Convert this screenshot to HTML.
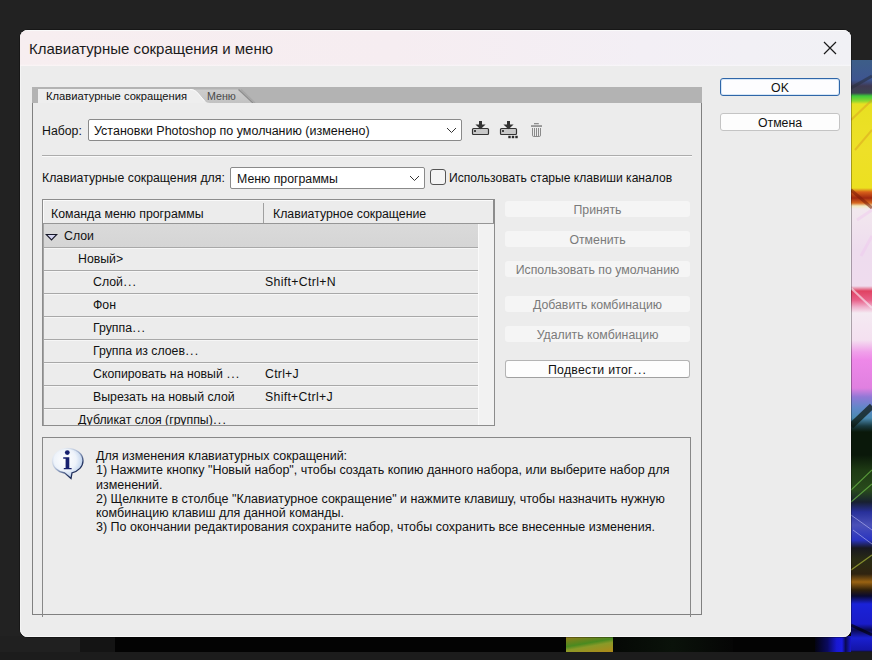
<!DOCTYPE html>
<html><head><meta charset="utf-8">
<style>
*{box-sizing:border-box;margin:0;padding:0}
html,body{width:872px;height:660px;overflow:hidden;background:#222222;font-family:"Liberation Sans",sans-serif;}
.a{position:absolute}
.t{position:absolute;white-space:nowrap;font-size:12.3px;color:#111;line-height:14px}
#dlg{left:20px;top:30px;width:831px;height:607px;border-radius:8px;background:#ececec;overflow:hidden;box-shadow:0 0 0 1px rgba(0,0,0,0.3),inset 0 -1px 0 #f6f6f6,inset -1px 0 0 #f2f0f2,inset 1px 0 0 #f4f4f4}
#title{left:0;top:0;width:831px;height:36px;background:linear-gradient(180deg,rgba(255,255,255,0) 33px,rgba(255,255,255,0.35) 34.5px,rgba(236,234,235,1) 36px),linear-gradient(90deg,#f7eef0,#f6edf1 45%,#f3eff5 75%,#f1f1f5);border-top:1px solid #fafafa}
</style></head><body>
<!-- background picture behind dialog -->
<div class="a" style="left:0;top:652px;width:872px;height:8px;background:#1c1c1c"></div>
<div class="a" style="left:0;top:636px;width:80px;height:16px;background:#202020"></div>
<div class="a" style="left:80px;top:636px;width:35px;height:16px;background:#141414"></div>
<div class="a" style="left:115px;top:60px;width:757px;height:592px;background:#030303"></div>
<div class="a" style="left:566px;top:636px;width:47px;height:16px;background:linear-gradient(170deg,#9a7a18 0%,#4a8a20 45%,#8a9a28 60%,#b08818 100%)"></div>
<div class="a" style="left:613px;top:636px;width:120px;height:16px;background:linear-gradient(90deg,#050805,#0a120a 50%,#050505)"></div>
<div class="a" style="left:815px;top:636px;width:36px;height:16px;background:linear-gradient(90deg,#030310,#0a0a60 35%,#1818d0 60%,#1a1ae0 75%,#0a0a50 85%,#1818d0)"></div>
<div class="a" style="left:851px;top:60px;width:21px;height:592px;background:linear-gradient(180deg,#3d5e88 0px,#3e5590 20px,#403a52 26px,#3c4450 33px,#3ec83a 36px,#8ad830 41px,#e8e022 44px,#eee028 90px,#ece020 128px,#d8601a 132px,#a02810 138px,#d86a20 143px,#f0eac0 146px,#f2e8ee 149px,#eedcee 190px,#efdcee 226px,#e04262 231px,#e86088 240px,#f0b0cc 247px,#f4eaf2 253px,#f4e0f0 280px,#f0a0ea 292px,#ee88e8 300px,#e080e0 328px,#9078d6 337px,#6088c8 348px,#4a8ab0 358px,#1a3a40 366px,#0a180a 372px,#0a180a 395px,#1e3a14 410px,#284a1c 430px,#182030 442px,#28309a 452px,#4a50b8 465px,#2a34c0 480px,#181820 488px,#2a2c14 500px,#302410 514px,#9a6212 522px,#30200a 530px,#0a0a30 536px,#1a22d8 544px,#1a1cc8 564px,#0a0a50 570px,#1a20d0 578px,#1414a8 590px,#141414 592px)"></div>
<svg class="a" style="left:851px;top:60px" width="21" height="592" viewBox="0 0 21 592">
 <path d="M0 28L21 16" stroke="#2a3040" stroke-width="3" opacity="0.6"/>
 <path d="M0 60L21 40M4 90L21 70" stroke="#d89a20" stroke-width="2" opacity="0.45"/>
 <path d="M0 130L21 148" stroke="#7a1a08" stroke-width="3" opacity="0.55"/>
 <path d="M6 160L21 150M10 196L21 176" stroke="#f0c4f0" stroke-width="3" opacity="0.4"/>
 <path d="M0 228L21 248" stroke="#f8f0f8" stroke-width="2" opacity="0.6"/>
 <path d="M0 366L21 346" stroke="#0a140a" stroke-width="6" opacity="0.7"/>
 <path d="M0 430L21 410M0 442L21 424" stroke="#7ad050" stroke-width="1.2" opacity="0.6"/>
 <path d="M0 455L21 470M2 470L21 484" stroke="#c8c8f8" stroke-width="1" opacity="0.55"/>
 <path d="M0 510L21 495" stroke="#c0d040" stroke-width="1.3" opacity="0.6"/>
 <path d="M0 565L21 575" stroke="#000" stroke-width="3" opacity="0.6"/>
</svg>
<div class="a" id="dlg">
  <div class="a" id="title"></div>
  <div class="t" style="left:9px;top:10px;font-size:15px;color:#1b1b1b;line-height:17px">Клавиатурные сокращения и меню</div>
  <svg class="a" style="left:803px;top:11px" width="14" height="14" viewBox="0 0 14 14"><path d="M1 1L13 13M13 1L1 13" stroke="#1a1a1a" stroke-width="1.2"/></svg>
</div>

<!-- tab bar -->
<div class="a" style="left:32px;top:87px;width:670px;height:16px;background:#b3b3b3"></div>
<svg class="a" style="left:32px;top:87px" width="240" height="16" viewBox="0 0 240 16">
  <defs><linearGradient id="mt" x1="0" y1="0" x2="0" y2="1"><stop offset="0" stop-color="#cdcdcd"/><stop offset="1" stop-color="#c2c2c2"/></linearGradient></defs>
  <path d="M150 2.5 L206.5 2.5 L221 16 L150 16Z" fill="url(#mt)"/>
  <path d="M206.5 2.5 L221 16" stroke="#8e8e8e" stroke-width="1.3"/>
  <path d="M209 2.5 L223 16" stroke="#a6a6a6" stroke-width="1.5"/>
  <path d="M6 2 L158 2 C162 2 164 3.5 166.5 6.5 L172.5 13.5 C174 15.2 175.5 16 178 16 L6 16Z" fill="#eeeeee"/>
  <path d="M158 2.5 C162 2.5 164 4 166.5 7 L172.5 14" fill="none" stroke="#fbfbfb" stroke-width="1"/>
</svg>
<div class="t" style="left:46px;top:89px;font-size:11.2px;color:#111">Клавиатурные сокращения</div>
<div class="t" style="left:207px;top:89px;font-size:10.7px;color:#4a4a4a">Меню</div>

<!-- panel borders -->
<div class="a" style="left:32px;top:103px;width:1px;height:512px;background:#808080"></div>
<div class="a" style="left:701px;top:103px;width:1px;height:512px;background:#808080"></div>
<div class="a" style="left:32px;top:614px;width:670px;height:1px;background:#808080"></div>

<div class="t" style="left:42px;top:124px">Набор:</div>
<div class="a" style="left:88px;top:119px;width:374px;height:22px;border:1px solid #8a8a8a;border-radius:2px;background:#fff"></div>
<div class="t" style="left:94px;top:124px;font-size:12.5px">Установки Photoshop по умолчанию (изменено)</div>
<svg class="a" style="left:446px;top:127px" width="11" height="7" viewBox="0 0 11 7"><path d="M1 1L5.5 5.5L10 1" fill="none" stroke="#333" stroke-width="1"/></svg>
<!-- icons -->
<svg class="a" style="left:471px;top:120px" width="20" height="20" viewBox="0 0 20 20">
  <rect x="1.5" y="8.5" width="16" height="6" rx="1" fill="#c8c8c8" stroke="#333" stroke-width="1.2"/>
  <rect x="3" y="10" width="2" height="2" fill="#444"/>
  <path d="M8 1h3v3.5h3.6l-5.1 4.8l-5.1-4.8h3.6z" fill="#333"/>
</svg>
<svg class="a" style="left:499px;top:120px" width="20" height="20" viewBox="0 0 20 20">
  <rect x="1.5" y="8.5" width="16" height="6" rx="1" fill="#c8c8c8" stroke="#333" stroke-width="1.2"/>
  <rect x="3" y="10" width="2" height="2" fill="#444"/>
  <path d="M8 1h3v3.5h3.6l-5.1 4.8l-5.1-4.8h3.6z" fill="#333"/>
  <rect x="9.3" y="15.8" width="2.4" height="2.4" fill="#2a2a2a"/><rect x="12.8" y="15.8" width="2.4" height="2.4" fill="#2a2a2a"/><rect x="16.3" y="15.8" width="2.4" height="2.4" fill="#2a2a2a"/>
</svg>
<svg class="a" style="left:526px;top:118px" width="22" height="22" viewBox="0 0 22 22">
  <rect x="8" y="5" width="4.8" height="1.3" fill="#8e8e8e"/>
  <rect x="5" y="7.2" width="11" height="1.7" fill="#8e8e8e"/>
  <path d="M6.5 10v7.6M8.5 10v8M10.5 10v8M12.5 10v8M14.5 10v7.6" stroke="#8a8a8a" stroke-width="1"/>
  <path d="M6.5 17.3Q6.5 18.5 7.8 18.5H13.2Q14.5 18.5 14.5 17.3" fill="none" stroke="#8a8a8a" stroke-width="1"/>
</svg>
<div class="a" style="left:42px;top:155px;width:650px;height:1px;background:#acacac"></div><div class="a" style="left:42px;top:156px;width:650px;height:1px;background:#fafafa"></div>

<div class="t" style="left:42px;top:171px">Клавиатурные сокращения для:</div>
<div class="a" style="left:230px;top:167px;width:195px;height:22px;border:1px solid #8a8a8a;border-radius:2px;background:#fff"></div>
<div class="t" style="left:237px;top:172px">Меню программы</div>
<svg class="a" style="left:409px;top:175px" width="11" height="7" viewBox="0 0 11 7"><path d="M1 1L5.5 5.5L10 1" fill="none" stroke="#333" stroke-width="1"/></svg>
<div class="a" style="left:430px;top:169px;width:16px;height:16px;border:1px solid #555;border-radius:3px;background:#f4f4f4"></div>
<div class="t" style="left:449px;top:171px;font-size:12.1px">Использовать старые клавиши каналов</div>

<!-- table -->
<div class="a" style="left:42px;top:199px;width:453px;height:227px;border:1px solid #8c8c8c;background:#ececec"></div>
<div class="a" style="left:43px;top:223px;width:451px;height:1px;background:#969696"></div>
<div class="a" style="left:43px;top:224px;width:451px;height:1px;background:#c4c4c4"></div>
<div class="a" style="left:43px;top:200px;width:450px;height:1px;background:#fafafa"></div>
<div class="a" style="left:43px;top:200px;width:1px;height:23px;background:#fafafa"></div>
<div class="a" style="left:493px;top:200px;width:1px;height:23px;background:#8c8c8c"></div>
<div class="a" style="left:263px;top:203px;width:1px;height:20px;background:#a0a0a0"></div>
<div class="t" style="left:51px;top:207px">Команда меню программы</div>
<div class="t" style="left:273px;top:207px">Клавиатурное сокращение</div>
<div class="a" style="left:43px;top:224px;width:435px;height:23px;background:linear-gradient(180deg,#dadada,#d5d5d5)"></div>
<div class="a" style="left:478px;top:224px;width:16px;height:201px;background:#f2f2f2;border-left:1px solid #fafafa"></div>
<div class="a" style="left:43px;top:224px;width:1px;height:201px;background:#a4a4a4"></div>
<svg class="a" style="left:45px;top:233px" width="13" height="8" viewBox="0 0 13 8"><path d="M1.2 1.5h10.6l-5.3 5.4z" fill="#d4d4f0" stroke="#161828" stroke-width="1.1" stroke-linejoin="miter"/></svg>
<div class="t" style="left:64px;top:229px">Слои</div>
<div class="a" style="left:44px;top:247px;width:434px;height:1px;background:#a8a8a8"></div><div class="a" style="left:44px;top:248px;width:434px;height:1px;background:#f6f6f6"></div>
<div class="t" style="left:78px;top:252px">Новый&gt;</div>
<div class="a" style="left:44px;top:270px;width:434px;height:1px;background:#a8a8a8"></div><div class="a" style="left:44px;top:271px;width:434px;height:1px;background:#f6f6f6"></div>
<div class="t" style="left:93px;top:275px">Слой<span style="margin-left:0.6px;letter-spacing:1.1px">...</span></div>
<div class="t" style="left:265px;top:275px;letter-spacing:0.33px">Shift+Ctrl+N</div>
<div class="a" style="left:44px;top:293px;width:434px;height:1px;background:#a8a8a8"></div><div class="a" style="left:44px;top:294px;width:434px;height:1px;background:#f6f6f6"></div>
<div class="t" style="left:93px;top:298px">Фон</div>
<div class="a" style="left:44px;top:316px;width:434px;height:1px;background:#a8a8a8"></div><div class="a" style="left:44px;top:317px;width:434px;height:1px;background:#f6f6f6"></div>
<div class="t" style="left:93px;top:321px">Группа<span style="margin-left:0.6px;letter-spacing:1.1px">...</span></div>
<div class="a" style="left:44px;top:339px;width:434px;height:1px;background:#a8a8a8"></div><div class="a" style="left:44px;top:340px;width:434px;height:1px;background:#f6f6f6"></div>
<div class="t" style="left:93px;top:344px">Группа из слоев<span style="margin-left:0.6px;letter-spacing:1.1px">...</span></div>
<div class="a" style="left:44px;top:362px;width:434px;height:1px;background:#a8a8a8"></div><div class="a" style="left:44px;top:363px;width:434px;height:1px;background:#f6f6f6"></div>
<div class="t" style="left:93px;top:367px">Скопировать на новый <span style="margin-left:0.6px;letter-spacing:1.1px">...</span></div>
<div class="t" style="left:265px;top:367px;letter-spacing:0.25px">Ctrl+J</div>
<div class="a" style="left:44px;top:385px;width:434px;height:1px;background:#a8a8a8"></div><div class="a" style="left:44px;top:386px;width:434px;height:1px;background:#f6f6f6"></div>
<div class="t" style="left:93px;top:390px">Вырезать на новый слой</div>
<div class="t" style="left:265px;top:390px;letter-spacing:0.3px">Shift+Ctrl+J</div>
<div class="a" style="left:44px;top:408px;width:434px;height:1px;background:#a8a8a8"></div><div class="a" style="left:44px;top:409px;width:434px;height:1px;background:#f6f6f6"></div>
<div class="t" style="left:78px;top:413px">Дубликат слоя (группы)<span style="margin-left:0.6px;letter-spacing:1.1px">...</span></div>
<div class="a" style="left:42px;top:425px;width:453px;height:10px;background:#ececec;border-top:1px solid #8c8c8c"></div>
<div class="a" style="left:505px;top:201px;width:185px;height:16px;border-radius:3px;background:#f5f5f5"></div>
<div class="t" style="left:505px;top:203px;width:185px;text-align:center;color:#7a7a7a">Принять</div>
<div class="a" style="left:505px;top:231px;width:185px;height:16px;border-radius:3px;background:#f5f5f5"></div>
<div class="t" style="left:505px;top:233px;width:185px;text-align:center;color:#7a7a7a">Отменить</div>
<div class="a" style="left:505px;top:261px;width:185px;height:16px;border-radius:3px;background:#f5f5f5"></div>
<div class="t" style="left:505px;top:263px;width:185px;text-align:center;color:#7a7a7a">Использовать по умолчанию</div>
<div class="a" style="left:505px;top:296px;width:185px;height:16px;border-radius:3px;background:#f5f5f5"></div>
<div class="t" style="left:505px;top:298px;width:185px;text-align:center;color:#7a7a7a">Добавить комбинацию</div>
<div class="a" style="left:505px;top:326px;width:185px;height:16px;border-radius:3px;background:#f5f5f5"></div>
<div class="t" style="left:505px;top:328px;width:185px;text-align:center;color:#7a7a7a">Удалить комбинацию</div>
<div class="a" style="left:505px;top:360px;width:185px;height:18px;border:1px solid #b4b4b4;border-bottom-color:#a0a0a0;border-radius:3px;background:#fdfdfd"></div>
<div class="t" style="left:505px;top:363px;width:185px;text-align:center;color:#111;letter-spacing:0.25px">Подвести итог<span style="margin-left:0.6px;letter-spacing:1.1px">...</span></div>
<div class="a" style="left:720px;top:78px;width:120px;height:18px;border:1px solid #2f66a8;border-radius:3px;background:#fdfdff;box-shadow:inset 0 0 0 1px #d6e6f6"></div>
<div class="t" style="left:720px;top:81px;width:120px;text-align:center;color:#111">OK</div>
<div class="a" style="left:720px;top:113px;width:120px;height:18px;border:1px solid #c4c4c4;border-radius:3px;background:#fdfdfd"></div>
<div class="t" style="left:720px;top:116px;width:120px;text-align:center;color:#111">Отмена</div>
<div class="a" style="left:42px;top:437px;width:649px;height:180px;border:1px solid #888;border-bottom:none"></div>
<svg class="a" style="left:48px;top:444px" width="40" height="38" viewBox="0 0 40 38">
 <defs>
  <radialGradient id="bf" cx="0.42" cy="0.38" r="0.65"><stop offset="0" stop-color="#ffffff"/><stop offset="0.55" stop-color="#eef3fa"/><stop offset="0.85" stop-color="#c4d6ee"/><stop offset="1" stop-color="#9fbce0"/></radialGradient>
  <linearGradient id="bs" x1="0.15" y1="0.1" x2="0.85" y2="0.95"><stop offset="0" stop-color="#e8eef6" stop-opacity="0.3"/><stop offset="0.45" stop-color="#9aaac8"/><stop offset="0.75" stop-color="#2a3a68"/><stop offset="1" stop-color="#101a40"/></linearGradient>
 </defs>
 <path d="M19.7 4.3C28.2 4.3 35 9.9 35 16.8C35 22.6 30.4 27.2 24 28.8L23 34.5L16.8 29C9.3 28 4.4 22.9 4.4 16.8C4.4 9.9 11.2 4.3 19.7 4.3Z" fill="url(#bf)" stroke="url(#bs)" stroke-width="1.3"/>
 <circle cx="19.3" cy="8.6" r="2.4" fill="#17206e"/>
 <path d="M15.2 13.3h6.1v10.6h2.3v1.4h-7.8v-1.4h1.8v-9.2h-2.4z" fill="#17206e"/>
</svg>
<div class="t" style="left:96px;top:449px;line-height:14.3px;font-size:12.5px">Для изменения клавиатурных сокращений:<br>1) Нажмите кнопку "Новый набор", чтобы создать копию данного набора, или выберите набор для<br>изменений.<br>2) Щелкните в столбце "Клавиатурное сокращение" и нажмите клавишу, чтобы назначить нужную<br>комбинацию клавиш для данной команды.<br>3) По окончании редактирования сохраните набор, чтобы сохранить все внесенные изменения.</div>
</body></html>
